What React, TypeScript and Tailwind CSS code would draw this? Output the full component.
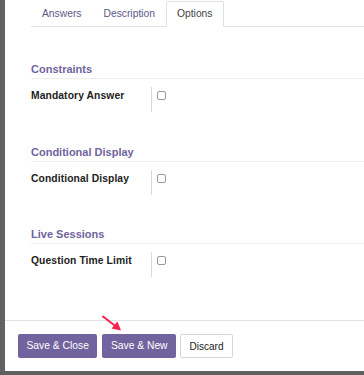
import React from 'react'

const FONT = { fontFamily: '"Liberation Sans", Arial, sans-serif' }

interface RowProps {
  label: string
}

function FieldRow({ label }: RowProps) {
  return (
    <div className="mt-[8px] flex h-[25px]">
      <div className="w-[120px] pt-px text-[10.3px] font-bold leading-[16px] tracking-[0.1px] text-[#222]">{label}</div>
      <div className="flex border-l border-[#d9d9d9] pl-[5px] pt-[4px]">
        <span className="block h-[9px] w-[9px] rounded-[2px] border border-[#9a9a9a] bg-white" />
      </div>
    </div>
  )
}

interface SectionProps {
  title: string
  label: string
  top: string
}

function Section({ title, label, top }: SectionProps) {
  return (
    <div className={top}>
      <div className="border-b border-[#eeeeee] pb-[2px] text-[11px] font-bold leading-[14px] text-[#71639e]">
        {title}
      </div>
      <FieldRow label={label} />
    </div>
  )
}

export default function App() {
  const tabs = ['Answers', 'Description', 'Options']
  return (
    <div className="relative flex h-[375px] w-[364px] overflow-hidden bg-[#5f5f5f]" style={FONT}>
      <div className="h-[371px] w-[5px] shrink-0 bg-[#626262]" />
      <div className="flex h-[371px] w-[359px] flex-col bg-white">
        {/* tabs */}
        <div className="pl-[26px] pt-px">
          <ul className="flex border-b border-[#dee2e6]">
            {tabs.map(t => (
              <li
                key={t}
                className={
                  t === 'Options'
                    ? '-mb-px flex h-[26px] items-center rounded-t-[2px] border border-[#dee2e6] border-b-white bg-white px-[10px] text-[10.3px] text-[#444]'
                    : '-mb-px flex h-[26px] items-center border border-transparent px-[10px] text-[10.3px] text-[#5d5887]'
                }
              >
                {t}
              </li>
            ))}
          </ul>
        </div>

        <div className="flex-1 pl-[26px]">
          <Section title="Constraints" label="Mandatory Answer" top="mt-[35px]" />
          <Section title="Conditional Display" label="Conditional Display" top="mt-[33px]" />
          <Section title="Live Sessions" label="Question Time Limit" top="mt-[32px]" />
        </div>

        {/* footer */}
        <div className="flex gap-[5px] border-t border-[#dee2e6] px-[13px] py-[13px]">
          <button className="h-[24px] rounded-[2px] bg-[#71639e] px-[8.5px] text-[10.3px] text-white">
            Save &amp; Close
          </button>
          <button className="h-[24px] rounded-[2px] bg-[#71639e] px-[8.5px] text-[10.3px] text-white">
            Save &amp; New
          </button>
          <button className="ml-[-1px] h-[24px] rounded-[2px] border border-[#d6d6d6] bg-white px-[8.5px] text-[10px] text-[#222]">
            Discard
          </button>
        </div>
      </div>

      {/* annotation arrow */}
      <svg className="pointer-events-none absolute left-0 top-0" width="364" height="375">
        <line x1="103" y1="316.5" x2="116" y2="326.5" stroke="#ff1f4e" strokeWidth="2" strokeLinecap="round" />
        <polygon points="121,330.5 111.5,328.5 117.5,321.5" fill="#ff1f4e" />
      </svg>
    </div>
  )
}
